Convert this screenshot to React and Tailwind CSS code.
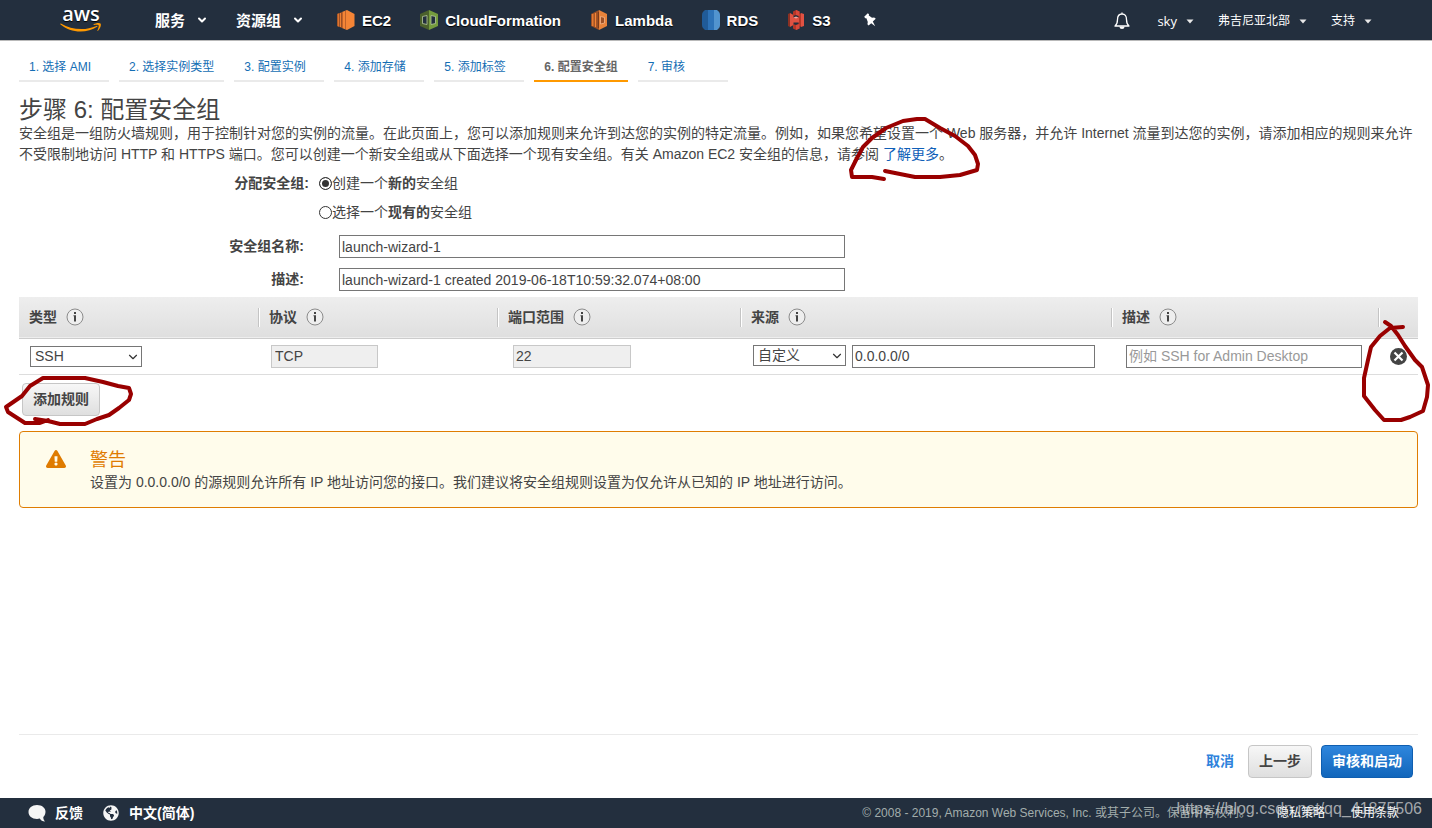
import React, { useState } from 'react';
import { ChevronDown } from 'lucide-react';
import { FaGlobeAmericas, FaExclamationTriangle } from 'react-icons/fa';

const steps = ['1. 选择 AMI', '2. 选择实例类型', '3. 配置实例', '4. 添加存储', '5. 添加标签', '6. 配置安全组', '7. 审核'];
const activeStep = 5;

const AwsLogo = () => (
  <svg width="42" height="38" viewBox="0 0 42 38" role="img" aria-label="aws">
    <text x="21" y="20" textAnchor="middle" fontSize="20" fontWeight="600" fill="#fff" fontFamily="'Open Sans', 'Noto Sans', sans-serif">
      aws
    </text>
    <path d="M0.500 23.500C6 28 13 30.600 20.500 30.600C26.500 30.600 32.500 28.800 37.200 25.800C37.900 25.400 37.300 24.500 36.500 24.900C31.500 27 26.500 28 21.500 28C13.800 28 7 26.200 1.300 22.700C0.600 22.300 0 23 0.500 23.500Z" fill="#f90" />
    <path d="M33.500 23.400C35.500 22 39.300 21.500 40.500 22.500C41.600 23.800 40 28 38 29.800C37.500 30.200 37.200 30 37.400 29.500C38 28 39.200 25 38.600 24.200C38 23.500 35.400 23.700 34 23.900C33.400 24 33.200 23.700 33.500 23.400Z" fill="#f90" />
  </svg>
);

const Ec2Icon = () => (
  <svg width="18" height="20" viewBox="0 0 18 20" aria-hidden="true">
    <path d="M0 4L5 2V18L0 16Z" fill="#9d5025" />
    <path d="M1.300 3.500V16.500M3.500 3V17" stroke="#f58536" strokeWidth="0.900" />
    <path d="M5 2L10 0L17.500 4V16L10 20L5 18Z" fill="#f58536" />
    <path d="M5.500 2V18M8.500 1V19" stroke="#c0622a" strokeWidth="1" />
  </svg>
);

const CloudFormationIcon = () => (
  <svg width="18" height="20" viewBox="0 0 18 20" aria-hidden="true">
    <path d="M0 4L9 0V20L0 16Z" fill="#4b612c" />
    <path d="M18 4L9 0V20L18 16Z" fill="#759c3e" />
    <path d="M2.500 6.500L7 5.500V14.500L2.500 13.500Z" fill="#232f3e" stroke="#b7ca9d" strokeWidth="0.800" />
    <path d="M15.500 6.500L11 5.500V14.500L15.500 13.500Z" fill="#232f3e" stroke="#b7ca9d" strokeWidth="0.800" />
  </svg>
);

const LambdaIcon = () => (
  <svg width="18" height="20" viewBox="0 0 18 20" aria-hidden="true">
    <path d="M1 4L9 0V20L1 16Z" fill="#9d5025" />
    <path d="M9 0L17 4V16L9 20Z" fill="#e8833a" />
    <path d="M2.800 4V16M5.500 3V17" stroke="#f58536" strokeWidth="1.200" />
    <path d="M10.500 6.500L14.500 7.500V13L10.500 14Z" fill="#9d5025" stroke="#fbbf93" strokeWidth="0.700" />
    <path d="M8.500 2V18" stroke="#7a3b1a" strokeWidth="1" />
  </svg>
);

const RdsIcon = () => (
  <svg width="18" height="20" viewBox="0 0 18 20" aria-hidden="true">
    <path d="M6 0H3C1 1.500 0 3 0 5V15C0 17 1 18.500 3 20H6Z" fill="#205b98" />
    <path d="M6 0H12V20H6Z" fill="#2e73b8" />
    <path d="M12 0H15C17 1.500 18 3 18 5V15C18 17 17 18.500 15 20H12Z" fill="#5294cf" />
  </svg>
);

const S3Icon = () => (
  <svg width="18" height="20" viewBox="0 0 18 20" aria-hidden="true">
    <path d="M1 4L3 3V17L1 16Z" fill="#8c3123" />
    <path d="M3 3L6.500 5V15L3 17Z" fill="#e05243" />
    <path d="M17 4L14 3V17L17 16Z" fill="#e05243" />
    <path d="M14 3L11.500 5V15L14 17Z" fill="#b63627" />
    <path d="M6 1.500L9 0L12.500 1.500V6L9 5L6 6Z" fill="#b63627" />
    <path d="M9 0L12.500 1.500V6L9 5Z" fill="#d9483a" />
    <path d="M6 7.500H12V12.500H6Z" fill="#e05243" />
    <path d="M6.500 7.500L9 6.500L11.500 7.500L9 8.500Z" fill="#efa59d" />
    <path d="M6 18.500L9 20L12.500 18.500V14L9 15L6 14Z" fill="#b63627" />
    <path d="M9 20L12.500 18.500V14L9 15Z" fill="#d9483a" />
  </svg>
);

const shortcuts = [
  { name: 'EC2', icon: Ec2Icon },
  { name: 'CloudFormation', icon: CloudFormationIcon },
  { name: 'Lambda', icon: LambdaIcon },
  { name: 'RDS', icon: RdsIcon },
  { name: 'S3', icon: S3Icon },
];

const PinIcon = () => (
  <svg width="12" height="14" viewBox="0 0 12 14" fill="#fff" aria-hidden="true">
    <path d="M0.200 3.800L3.800 0.200L5 1.200L4.800 2.500L8 4.800L10.200 4.600L11.800 5.800L8.800 8.600L11.200 13.200L7.200 10.200L4.600 12.600L3.400 11.200L3.800 9L2.400 5.200L1.200 5.200Z" />
  </svg>
);

const BellIcon = () => (
  <svg width="16" height="18" viewBox="0 0 16 18" fill="none" stroke="#fff" aria-hidden="true">
    <path d="M8 0.500V2M1 14H15C13 12.500 12.500 11 12.500 7.500C12.500 4 11 2 8 2C5 2 3.500 4 3.500 7.500C3.500 11 3 12.500 1 14Z" strokeWidth="1.300" strokeLinejoin="round" />
    <path d="M5.500 14.500H10.500C10.500 16.200 9.500 17 8 17C6.500 17 5.500 16.200 5.500 14.500Z" fill="#fff" stroke="none" />
  </svg>
);

const Caret = () => (
  <svg width="8" height="5" viewBox="0 0 8 5" aria-hidden="true">
    <path d="M0.500 0.500H7.500L4 4.500Z" fill="#e8e8e8" />
  </svg>
);

const InfoIcon = () => (
  <svg width="18" height="18" viewBox="0 0 18 18" aria-hidden="true">
    <circle cx="9" cy="9" r="8" fill="#eee" stroke="#8c8c8c" />
    <path d="M8 4H10V6H8ZM7.500 7.200H10V13.500H8V8.200H7.500Z" fill="#444" />
  </svg>
);

// Hand-drawn pen mark laid over the element it points at
const PenMark = ({ width, height, d, className }) => (
  <svg
    width={width}
    height={height}
    viewBox={`0 0 ${width} ${height}`}
    fill="none"
    stroke="#990000"
    strokeWidth="4"
    strokeLinecap="round"
    strokeLinejoin="round"
    aria-hidden="true"
    className={`absolute max-w-none pointer-events-none z-10 ${className}`}
  >
    <path d={d} />
  </svg>
);

const TopNav = () => (
  <header className="flex h-[41px] items-center justify-between border-b border-[#b9b9b9] bg-[#232f3e] px-[60px] text-white [text-shadow:0_1px_1px_#000]">
    <div className="flex items-center text-[15px] font-bold">
      <a href="#home" className="mr-[53px]">
        <AwsLogo />
      </a>
      <button className="mr-7 flex items-center gap-[11px]">
        服务
        <ChevronDown className="h-3 w-3" strokeWidth={4} />
      </button>
      <button className="mr-[33px] flex items-center gap-[11px]">
        资源组
        <ChevronDown className="h-3 w-3" strokeWidth={4} />
      </button>
      <nav className="flex items-center gap-[29px]">
        {shortcuts.map(({ name, icon: Icon }) => (
          <a key={name} href={`#${name}`} className="flex items-center gap-[7px]">
            <Icon />
            {name}
          </a>
        ))}
        <button aria-label="固定快捷方式" className="pl-1">
          <PinIcon />
        </button>
      </nav>
    </div>
    <div className="flex items-center gap-6 pt-[2px] text-[12px]">
      <button aria-label="通知" className="mr-[3px]">
        <BellIcon />
      </button>
      <button className="flex items-center gap-[9px] font-['Open_Sans','Noto_Sans',sans-serif] text-[13px]">
        sky
        <Caret />
      </button>
      <button className="flex items-center gap-[9px]">
        弗吉尼亚北部
        <Caret />
      </button>
      <button className="flex items-center gap-[9px]">
        支持
        <Caret />
      </button>
    </div>
  </header>
);

const StepTabs = () => (
  <nav className="flex gap-[10px] text-[12px]">
    {steps.map((step, i) => (
      <a
        key={step}
        href={`#step-${i + 1}`}
        className={`flex h-[30px] min-w-[90px] items-center border-b-2 px-[10px] pt-[2px] ${
          i === activeStep ? 'border-[#f90] font-bold text-[#666]' : 'border-[#eaeaea] text-[#146eb4]'
        }`}
      >
        {step}
      </a>
    ))}
  </nav>
);

const GroupForm = () => {
  const [mode, setMode] = useState('new');
  const [name, setName] = useState('launch-wizard-1');
  const [description, setDescription] = useState('launch-wizard-1 created 2019-06-18T10:59:32.074+08:00');

  const radioClass =
    'h-[13px] w-[13px] appearance-none rounded-full border border-[#333] bg-white checked:bg-[#333] checked:shadow-[inset_0_0_0_2px_#fff]';
  const inputClass = 'ml-[35px] h-[23px] w-[506px] border border-[#767676] px-[2px]';

  return (
    <div>
      <fieldset className="flex pt-1">
        <legend className="float-left w-[290px] text-right leading-[29px] font-bold">分配安全组:</legend>
        <div className="ml-[10px] leading-[29px]">
          <label className="flex h-[29px] items-center">
            <input type="radio" name="mode" className={radioClass} checked={mode === 'new'} onChange={() => setMode('new')} />
            <span>
              创建一个<b>新的</b>安全组
            </span>
          </label>
          <label className="flex h-[29px] items-center">
            <input type="radio" name="mode" className={radioClass} checked={mode === 'existing'} onChange={() => setMode('existing')} />
            <span>
              选择一个<b>现有的</b>安全组
            </span>
          </label>
        </div>
      </fieldset>
      <div className="mt-2 flex items-center">
        <label htmlFor="group-name" className="w-[285px] text-right font-bold">安全组名称:</label>
        <input id="group-name" className={inputClass} value={name} onChange={(e) => setName(e.target.value)} />
      </div>
      <div className="mt-[10px] flex items-center">
        <label htmlFor="group-description" className="w-[285px] text-right font-bold">描述:</label>
        <input id="group-description" className={inputClass} value={description} onChange={(e) => setDescription(e.target.value)} />
      </div>
    </div>
  );
};

const Select = ({ label, options, className }) => (
  <div className={`relative ${className}`}>
    <select aria-label={label} className="block h-[21px] w-full appearance-none border border-[#767676] bg-white pl-1 leading-[19px]">
      {options.map((option) => (
        <option key={option}>{option}</option>
      ))}
    </select>
    <ChevronDown className="pointer-events-none absolute top-1 right-[2px] h-[14px] w-[14px] text-[#333]" />
  </div>
);

const HeaderCell = ({ children, first }) => (
  <th scope="col" className="p-0 text-left">
    <div className={`flex h-[19px] items-center gap-[9px] pl-[10px] ${first ? '' : 'border-l border-[#c4c4c4] shadow-[inset_1px_0_0_#fff]'}`}>
      {children}
      {children && <InfoIcon />}
    </div>
  </th>
);

const RulesTable = () => (
  <table className="mt-[6px] w-full table-fixed border-collapse">
    <colgroup>
      <col className="w-[239px]" />
      <col className="w-[239px]" />
      <col className="w-[243px]" />
      <col />
      <col className="w-[267px]" />
      <col className="w-[40px]" />
    </colgroup>
    <thead>
      <tr className="h-[41px] border-b border-[#ccc] bg-linear-to-b from-[#eee] to-[#dfdfdf]">
        <HeaderCell first>类型</HeaderCell>
        <HeaderCell>协议</HeaderCell>
        <HeaderCell>端口范围</HeaderCell>
        <HeaderCell>来源</HeaderCell>
        <HeaderCell>描述</HeaderCell>
        <HeaderCell />
      </tr>
    </thead>
    <tbody>
      <tr className="h-[36px] border-b border-[#ddd]">
        <td className="p-0 pl-[11px]">
          <Select label="类型" options={['SSH', 'HTTP', 'HTTPS']} className="w-[112px]" />
        </td>
        <td className="p-0 pl-[13px]">
          <input aria-label="协议" disabled value="TCP" className="block h-[23px] w-[107px] border border-[#c8c8c8] bg-[#efefef] px-[3px]" />
        </td>
        <td className="p-0 pl-[16px]">
          <input aria-label="端口范围" disabled value="22" className="block h-[23px] w-[118px] border border-[#c8c8c8] bg-[#efefef] px-[2px]" />
        </td>
        <td className="p-0 pr-[16px] pl-[13px]">
          <div className="flex items-start gap-[6px]">
            <Select label="来源" options={['自定义', '任何位置', '我的 IP']} className="w-[93px]" />
            <input aria-label="来源 CIDR" defaultValue="0.0.0.0/0" className="h-[23px] min-w-0 flex-1 border border-[#767676] px-[2px]" />
          </div>
        </td>
        <td className="p-0 pr-[16px] pl-[15px]">
          <input aria-label="描述" placeholder="例如 SSH for Admin Desktop" className="block h-[23px] w-full border border-[#767676] px-[2px] placeholder:text-[#999]" />
        </td>
        <td className="p-0 pl-3">
          <div className="relative h-[17px] w-[17px]">
            <button aria-label="删除规则" className="block">
              <svg width="17" height="17" viewBox="0 0 17 17" aria-hidden="true">
                <circle cx="8.500" cy="8.500" r="8.500" fill="#444" />
                <path d="M4.500 4.500L12.500 12.500M12.500 4.500L4.500 12.500" stroke="#fff" strokeWidth="2.200" />
              </svg>
            </button>
            <PenMark
              width={74}
              height={108}
              className="-top-8 -left-8"
              d="M27 6L33 10L40 19L47 30L57 44L64 51L70 69L69 81L65 95L52 101L43 104H26L17 94L6 80V62L10 44L13 31L22 20L32 12L45 11"
            />
          </div>
        </td>
      </tr>
    </tbody>
  </table>
);

const greyButton = 'h-[33px] rounded border border-[#c6c6c6] bg-linear-to-b from-[#f7f7f7] to-[#dfdfdf] px-[10px] font-bold';

const Warning = () => (
  <section className="mt-[15px] flex rounded border border-[#df7d01] bg-[#fffceb] pt-4 pb-[14px] pl-[26px]">
    <FaExclamationTriangle className="mt-px mr-6 h-5 w-5 text-[#df7b00]" />
    <div>
      <h2 className="text-[18px] leading-6 text-[#df7b00]">警告</h2>
      <p className="leading-[21px]">设置为 0.0.0.0/0 的源规则允许所有 IP 地址访问您的接口。我们建议将安全组规则设置为仅允许从已知的 IP 地址进行访问。</p>
    </div>
  </section>
);

const PageFooter = () => (
  <footer className="relative flex h-[30px] items-center justify-between bg-[#232f3e] pr-[33px] pl-7 text-white">
    <div className="flex items-center gap-5 font-bold">
      <a href="#feedback" className="flex items-center gap-[9px]">
        <svg width="18" height="17" viewBox="0 0 18 17" fill="#f5f5f5" aria-hidden="true">
          <path d="M9 0C14 0 17.500 2.800 17.500 6.800C17.500 9 16.600 10.700 15.300 12C15.300 14 15.800 15.300 17 16.500C14.500 16.500 12.800 15.500 11.800 13.600C10.800 13.900 10 14 9 14C4 14 0.500 11 0.500 7C0.500 3 4 0 9 0Z" />
        </svg>
        反馈
      </a>
      <button className="flex items-center gap-[10px]">
        <FaGlobeAmericas className="h-4 w-4 text-[#f5f5f5]" />
        中文(简体)
      </button>
    </div>
    <div className="flex items-center text-[12px]">
      <span className="mr-[26px] text-[#a2adac]">© 2008 - 2019, Amazon Web Services, Inc. 或其子公司。保留所有权利。</span>
      <a href="#privacy" className="mr-[26px]">隐私策略</a>
      <a href="#terms">使用条款</a>
    </div>
    <span className="pointer-events-none absolute right-[10px] bottom-[9px] text-[16px] leading-5 text-[#ddd]/70">
      https://blog.csdn.net/qq_41875506
    </span>
  </footer>
);

const App = () => (
  <div
    lang="zh-CN"
    className="flex min-h-screen flex-col overflow-x-hidden bg-white font-['Liberation_Sans','Noto_Sans_CJK_SC',sans-serif] text-[14px] leading-[21px] text-[#444]"
  >
    <TopNav />
    <main className="flex flex-1 flex-col pt-[11px] pr-[14px] pl-[19px]">
      <StepTabs />
      <h1 className="mt-[14px] text-[24px] leading-[27px]">步骤 6: 配置安全组</h1>
      <p>
        安全组是一组防火墙规则，用于控制针对您的实例的流量。在此页面上，您可以添加规则来允许到达您的实例的特定流量。例如，如果您希望设置一个 Web 服务器，并允许 Internet 流量到达您的实例，请添加相应的规则来允许不受限制地访问 HTTP 和 HTTPS 端口。您可以创建一个新安全组或从下面选择一个现有安全组。有关 Amazon EC2 安全组的信息，请参阅{' '}
        <span className="relative">
          <a href="#learn-more" className="text-[#0f5fb8]">了解更多</a>
          <PenMark
            width={140}
            height={72}
            className="-top-[34px] -left-[38px]"
            d="M39 67L27 65L7 65L6 58L12 46L18 35L27 26L41 16L58 9L72 7H80L95 16L110 24L123 34L130 43L133 52L132 58L115 63L95 65H70L40 59"
          />
        </span>
        。
      </p>
      <GroupForm />
      <RulesTable />
      <div className="mt-2 ml-[3px]">
        <div className="relative inline-block">
          <button className={`block ${greyButton}`}>添加规则</button>
          <PenMark
            width={136}
            height={58}
            className="-top-[11px] -left-[22px]"
            d="M35 47L48 49L60 52H85L97 47L109 43L119 36L129 28L131 22L129 16L118 14L103 10L85 6H43L30 14L22 24L6 35L8 40L25 51H40L48 48"
          />
        </div>
      </div>
      <Warning />
      <div className="mt-auto mb-5 flex items-center justify-end border-t border-[#eaeaea] pt-[10px] pr-[5px]">
        <a href="#cancel" className="mr-[14px] font-bold text-[#2e82dc]">取消</a>
        <button className={`mr-[9px] ${greyButton}`}>上一步</button>
        <button className="h-[33px] rounded border border-[#0f5eb0] bg-linear-to-b from-[#2e86dd] to-[#1166bb] px-[10px] font-bold text-white">
          审核和启动
        </button>
      </div>
    </main>
    <PageFooter />
  </div>
);

export default App;
